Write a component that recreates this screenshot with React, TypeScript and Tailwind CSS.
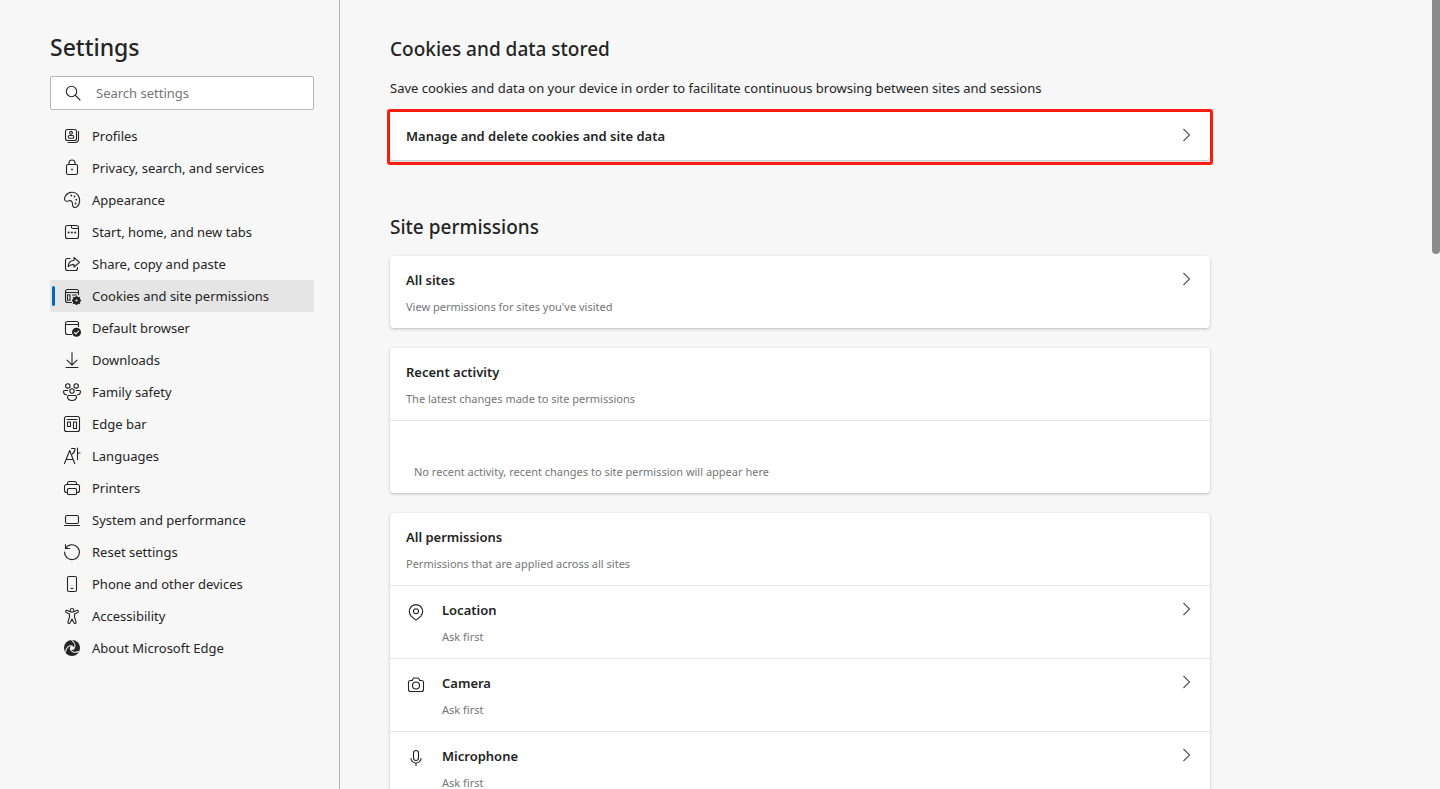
import type { ReactNode } from "react";

function Icon({ children }: { children: ReactNode }) {
  return (
    <svg
      className="size-5 shrink-0"
      viewBox="0 0 20 20"
      fill="none"
      stroke="currentColor"
      strokeWidth="1.1"
      strokeLinecap="round"
      strokeLinejoin="round"
      aria-hidden="true"
    >
      {children}
    </svg>
  );
}

function Chevron() {
  return (
    <span className="flex h-6 items-center pb-0.5">
      <svg className="h-3.5 w-2 shrink-0 text-[#5a5a5a]" viewBox="0 0 8 14" fill="none" stroke="currentColor" strokeWidth="1.2" aria-hidden="true">
        <path d="M.5 1l6 6-6 6" />
      </svg>
    </span>
  );
}

const windowPath = "M9.5 16.5h-4a2 2 0 0 1-2-2v-9a2 2 0 0 1 2-2h9a2 2 0 0 1 2 2v3";

const gearTeeth = [0, 45, 90, 135, 180, 225, 270, 315];

const swirlBlades = [0, 120, 240];

const navItems: { label: string; icon: ReactNode; current?: boolean }[] = [
  {
    label: "Profiles",
    icon: (
      <>
        <rect x="3.5" y="3.5" width="11" height="11" rx="2" />
        <path d="M16.5 5.5V13a3.5 3.5 0 0 1-3.5 3.5H6" />
        <circle cx="9" cy="6.8" r="1.4" />
        <rect x="6.2" y="9.5" width="5.6" height="2.8" rx="1.4" />
      </>
    ),
  },
  {
    label: "Privacy, search, and services",
    icon: (
      <>
        <rect x="4.5" y="6.5" width="11" height="10" rx="1.5" />
        <path d="M7 6.5V5a3 3 0 0 1 6 0v1.5" />
        <circle cx="10" cy="11.5" r=".9" fill="currentColor" stroke="none" />
      </>
    ),
  },
  {
    label: "Appearance",
    icon: (
      <>
        <path d="M3.7 5.6C6.3 1.7 12.7 1 15.8 4.8c3 3.7 2.2 9.9-.8 12-2.4 1.6-4.6.2-4.5-2.3.1-2.7-1.2-4.3-3.2-3.8-1.9.5-2.9 1.3-4.2-.2-1.1-1.3-.4-3.4.6-4.9Z" />
        <g fill="currentColor" stroke="none">
          <circle cx="9.3" cy="5.5" r=".9" />
          <circle cx="12.5" cy="6.5" r=".9" />
          <circle cx="14.3" cy="9.7" r=".9" />
          <circle cx="13.6" cy="13.5" r=".9" />
        </g>
      </>
    ),
  },
  {
    label: "Start, home, and new tabs",
    icon: (
      <>
        <rect x="3.5" y="3.5" width="13" height="13" rx="2" />
        <path d="M9.5 3.5V5A1.5 1.5 0 0 0 11 6.5h5.5" />
        <path d="M6.7 10.5h.01M9.9 10.5h.01M13.1 10.5h.01" strokeWidth="2" />
      </>
    ),
  },
  {
    label: "Share, copy and paste",
    icon: (
      <>
        <path d="M8 4.5H5.500a2 2 0 0 0-2 2v8a2 2 0 0 0 2 2h8a2 2 0 0 0 2-2v-1" />
        <path d="M12 6.2V3.5l5.5 4.8-5.500 4.700v-2.600c-2.600 0-4.300.5-5.800 2.300 0-3.600 2-6.200 5.800-6.500Z" />
      </>
    ),
  },
  {
    label: "Cookies and site permissions",
    current: true,
    icon: (
      <>
        <path d={windowPath} />
        <path d="M3.5 6.5h13M10.5 9h4" />
        <rect x="5.5" y="8.8" width="2.5" height="5.5" />
        <g stroke="none" fill="currentColor">
          <circle cx="14.5" cy="14.5" r="3.7" />
          {gearTeeth.map((angle) => (
            <rect key={angle} x="13.6" y="9.9" width="1.8" height="2" rx=".4" transform={`rotate(${angle} 14.5 14.5)`} />
          ))}
        </g>
        <circle cx="14.5" cy="14.5" r="1.1" fill="#e5e5e5" stroke="none" />
      </>
    ),
  },
  {
    label: "Default browser",
    icon: (
      <>
        <path d={windowPath} />
        <path d="M3.5 6.5h13" />
        <circle cx="14.5" cy="14.3" r="4.5" fill="currentColor" stroke="none" />
        <path d="M12.5 14.5l1.400 1.400 2.700-2.900" stroke="#f7f7f7" />
      </>
    ),
  },
  {
    label: "Downloads",
    icon: <path d="M10 2.5V15M5 10.2l5 5 5-5M4 17.5h12" />,
  },
  {
    label: "Family safety",
    icon: (
      <>
        <circle cx="5.8" cy="3.9" r="2.2" />
        <circle cx="14.2" cy="3.9" r="2.2" />
        <circle cx="10" cy="9" r="2.2" />
        <path d="M5.8 8.5H2.5a1 1 0 0 0-1 1c0 2 1.300 3.200 3 3.300M14.200 8.500h3.300a1 1 0 0 1 1 1c0 2-1.300 3.200-3 3.300" />
        <path d="M6.5 13.5h7a1 1 0 0 1 1 1c0 2.500-2 4-4.500 4s-4.500-1.500-4.500-4a1 1 0 0 1 1-1Z" />
      </>
    ),
  },
  {
    label: "Edge bar",
    icon: (
      <>
        <rect x="2.5" y="2.5" width="15" height="15" rx="2" />
        <path d="M5 5.5h10" />
        <rect x="5.5" y="8" width="3" height="4.5" />
        <rect x="11.5" y="8" width="3" height="6.5" />
      </>
    ),
  },
  {
    label: "Languages",
    icon: (
      <>
        <path d="M2.5 17.5l5.200-13 5 13M4.300 13.500h6.800" />
        <path d="M9.5 2.5H13c0 2.500-.9 4.300-2.600 5.500M15.500 2v11.500M15.500 7h2.500" />
      </>
    ),
  },
  {
    label: "Printers",
    icon: (
      <>
        <path d="M5.5 14.5h-1a2 2 0 0 1-2-2v-4a2 2 0 0 1 2-2h11a2 2 0 0 1 2 2v4a2 2 0 0 1-2 2h-1" />
        <path d="M5.5 6.5v-1a2 2 0 0 1 2-2h5a2 2 0 0 1 2 2v1" />
        <rect x="5.5" y="10.5" width="9" height="6" rx="1" />
      </>
    ),
  },
  {
    label: "System and performance",
    icon: (
      <>
        <rect x="3.5" y="5.5" width="13" height="8" rx="1.5" />
        <path d="M2.5 15.5h15" />
      </>
    ),
  },
  {
    label: "Reset settings",
    icon: <path d="M3.5 2.5v4h4M3.7 6.300A7.400 7.400 0 1 1 2.600 10" />,
  },
  {
    label: "Phone and other devices",
    icon: (
      <>
        <rect x="5.5" y="2.5" width="9" height="15" rx="1.5" />
        <path d="M9 14.5h2" />
      </>
    ),
  },
  {
    label: "Accessibility",
    icon: (
      <>
        <circle cx="10" cy="4.3" r="1.8" />
        <path d="M8.3 5.7 5.2 4.4c-1.500-.5-2.200 1.300-.9 2l3.200 1.600v3l-1.500 4.900c-.5 1.600 1.500 2.200 2.100.8L10 13l1.900 3.700c.6 1.400 2.600.8 2.100-.8L12.500 11V8l3.200-1.600c1.300-.7.600-2.500-.9-2l-3.100 1.300" />
      </>
    ),
  },
  {
    label: "About Microsoft Edge",
    icon: (
      <>
        <circle cx="10" cy="10" r="8" fill="currentColor" stroke="none" />
        <g stroke="#f7f7f7" strokeWidth="1">
          {swirlBlades.map((angle) => (
            <path key={angle} d="M10.5 8C7.500 6.800 4.500 8.200 3 12.800" transform={`rotate(${angle - 10} 10 10)`} />
          ))}
        </g>
        <circle cx="10" cy="10" r="2.1" fill="#f7f7f7" stroke="none" />
      </>
    ),
  },
];

const permissions = [
  {
    name: "Location",
    state: "Ask first",
    icon: (
      <>
        <path d="M15 13.8l-3.900 3.500a1.600 1.600 0 0 1-2.200 0L5 13.800a6.700 6.700 0 1 1 10 0Z" />
        <circle cx="10" cy="9.2" r="2.5" />
      </>
    ),
  },
  {
    name: "Camera",
    state: "Ask first",
    icon: (
      <>
        <path d="M7.2 3.5 6.2 5.500H4.500a2 2 0 0 0-2 2v7a2 2 0 0 0 2 2h11a2 2 0 0 0 2-2v-7a2 2 0 0 0-2-2h-1.700l-1-2c-.2-.4-.4-.5-.8-.5H8c-.4 0-.6.1-.8.5Z" />
        <circle cx="10" cy="10.5" r="3.5" />
      </>
    ),
  },
  {
    name: "Microphone",
    state: "Ask first",
    icon: (
      <>
        <rect x="7.5" y="2.5" width="5" height="10" rx="2.5" />
        <path d="M5 10.5a5 4.500 0 0 0 10 0M10 15v2.500" />
      </>
    ),
  },
];

function CardText({ title, detail }: { title: string; detail: string }) {
  return (
    <div className="min-w-0 flex-1">
      <h3 className="text-[13px] leading-6 font-semibold">{title}</h3>
      <p className="mt-1.5 text-[11px] leading-[18px] text-[#767676]">{detail}</p>
    </div>
  );
}

const cardClass = "rounded bg-white shadow-[0_1px_3px_rgba(0,0,0,0.25)]";

export default function App() {
  return (
    <div className="relative flex h-screen overflow-hidden bg-[#f7f7f7] font-['Noto_Sans','Open_Sans',sans-serif] text-[#242424]">
      <aside className="w-[340px] shrink-0 border-r border-[#b5b5b5] pr-[25px] pl-[50px]">
        <h1 className="pt-[30px] text-[23px] leading-[34px] font-medium">Settings</h1>
        <div className="mt-3 flex h-[34px] items-center gap-[13px] rounded-xs border border-[#b8b8b8] bg-white pl-3">
          <Icon>
            <circle cx="8.5" cy="8.5" r="5.2" />
            <path d="M12.3 12.3 17 17" />
          </Icon>
          <input
            type="search"
            aria-label="Search settings"
            placeholder="Search settings"
            className="h-full min-w-0 flex-1 bg-transparent text-[13px] leading-5 outline-none placeholder:text-[#767676]"
          />
        </div>
        <nav className="mt-2.5" aria-label="Settings">
          <ul>
            {navItems.map((item) => (
              <li key={item.label}>
                <a
                  href="#"
                  aria-current={item.current ? "page" : undefined}
                  className={
                    item.current
                      ? "relative flex h-8 items-center gap-2.5 rounded-xs bg-[#e5e5e5] pl-3 text-[13px] leading-5"
                      : "flex h-8 items-center gap-2.5 rounded-xs pl-3 text-[13px] leading-5"
                  }
                >
                  {item.current && <span className="absolute top-1.5 left-0.5 h-5 w-[3px] rounded-xs bg-[#0067c0]" />}
                  <Icon>{item.icon}</Icon>
                  {item.label}
                </a>
              </li>
            ))}
          </ul>
        </nav>
      </aside>

      <main className="min-w-0 flex-1 overflow-hidden px-[50px]">
        <div className="max-w-[820px]">
          <section>
            <h2 className="pt-[35px] text-[19px] leading-7 font-medium">Cookies and data stored</h2>
            <p className="mt-[15px] text-[13px] leading-5">
              Save cookies and data on your device in order to facilitate continuous browsing between sites and sessions
            </p>
            <div className="-mx-[3px] mt-[11px] rounded-[3px] border-3 border-[#ff1d12] pb-0.5">
              <button type="button" className={`${cardClass} flex h-12 w-full items-center justify-between pr-[19px] pl-4 text-left`}>
                <span className="text-[13px] leading-6 font-semibold">Manage and delete cookies and site data</span>
                <Chevron />
              </button>
            </div>
          </section>

          <section className="mt-12">
            <h2 className="text-[19px] leading-7 font-medium">Site permissions</h2>

            <a href="#" className={`${cardClass} mt-[15px] flex py-3 pr-[19px] pl-4`}>
              <CardText title="All sites" detail="View permissions for sites you've visited" />
              <Chevron />
            </a>

            <div className={`${cardClass} mt-5`}>
              <div className="flex px-4 py-3">
                <CardText title="Recent activity" detail="The latest changes made to site permissions" />
              </div>
              <p className="border-t border-[#e5e5e5] px-6 pt-[42px] pb-3 text-[11px] leading-[18px] text-[#767676]">
                No recent activity, recent changes to site permission will appear here
              </p>
            </div>

            <div className={`${cardClass} mt-5`}>
              <div className="flex px-4 py-3">
                <CardText title="All permissions" detail="Permissions that are applied across all sites" />
              </div>
              <ul>
                {permissions.map((permission) => (
                  <li key={permission.name}>
                    <a href="#" className="flex border-t border-[#e5e5e5] py-3 pr-[19px] pl-4">
                      <div className="mr-4 pt-1">
                        <Icon>{permission.icon}</Icon>
                      </div>
                      <CardText title={permission.name} detail={permission.state} />
                      <Chevron />
                    </a>
                  </li>
                ))}
              </ul>
            </div>
          </section>
        </div>
      </main>

      <div className="absolute top-0 right-0 h-[254px] w-2 rounded-b-full bg-[#8b8b8b]" aria-hidden="true" />
    </div>
  );
}
